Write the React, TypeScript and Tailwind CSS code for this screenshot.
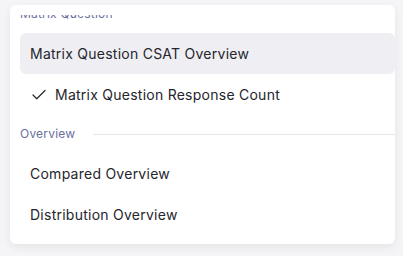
import { Check } from 'lucide-react';

const font = { fontFamily: 'Inter, "Noto Sans", sans-serif' };

function SectionHeader({ label }: { label: string }) {
  return (
    <div className="h-[38px] flex items-center gap-[18px]">
      <span className="text-[12px] text-[#6b6f9e] leading-none tracking-[0.2px]">{label}</span>
      <div className="flex-1 h-px bg-[#e8e8ec]" />
    </div>
  );
}

function Item({ label, active, checked }: { label: string; active?: boolean; checked?: boolean }) {
  return (
    <div
      className={`h-[41px] flex items-center px-[10px] rounded-md text-[14px] tracking-[0.25px] text-[#25252d] ${
        active ? 'bg-[#efeff3]' : ''
      }`}
    >
      {checked && <Check size={18} strokeWidth={1.6} className="mr-[7px] text-[#25252d]" />}
      <span>{label}</span>
    </div>
  );
}

export default function App() {
  return (
    <div className="w-[403px] h-[256px] bg-[#f5f5f7] pt-[5px] pl-[10px]" style={font}>
      <div className="w-[385px] h-[239px] bg-white rounded-md shadow-[0_3px_10px_rgba(0,0,0,0.07)] pt-[10px] overflow-hidden">
        <div className="h-[229px] overflow-hidden pl-[10px]">
          <div className="-mt-[20px]">
            <SectionHeader label="Matrix Question" />
            <Item label="Matrix Question CSAT Overview" active />
            <Item label="Matrix Question Response Count" checked />
            <SectionHeader label="Overview" />
            <Item label="Compared Overview" />
            <Item label="Distribution Overview" />
          </div>
        </div>
      </div>
    </div>
  );
}
